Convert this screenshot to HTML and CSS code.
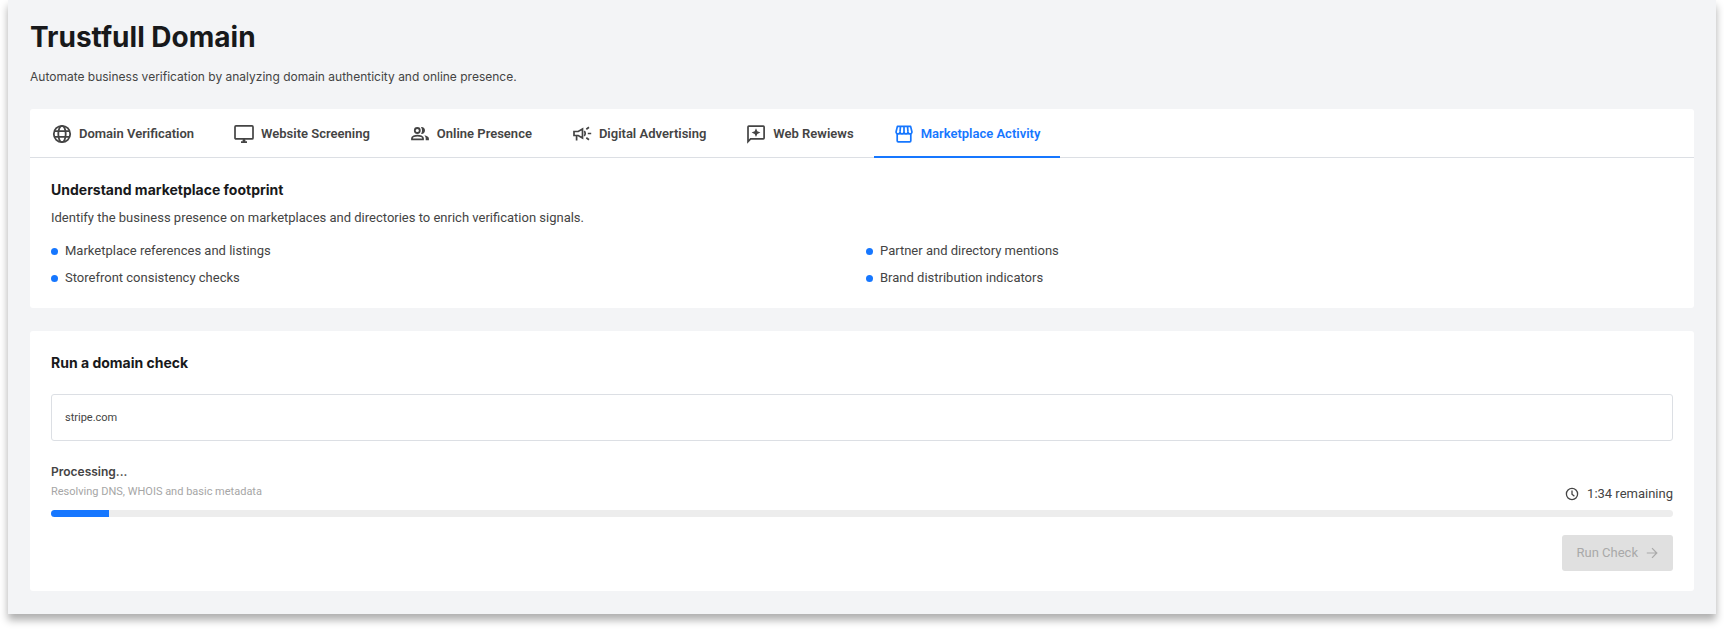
FILE: index.html
```html
<!DOCTYPE html>
<html lang="en">
<head>
<meta charset="utf-8">
<title>Trustfull Domain</title>
<link rel="stylesheet" href="styles.css">
</head>
<body>
<main class="page">
  <header class="page-header">
    <h1 class="page-title">Trustfull Domain</h1>
    <p class="page-subtitle">Automate business verification by analyzing domain authenticity and online presence.</p>
  </header>

  <section class="card">
    <div class="tabs" role="tablist">
      <button class="tab" type="button" role="tab" aria-selected="false">
        <svg class="icon" viewBox="0 0 20 20" fill="none" stroke="currentColor" stroke-width="1.8"><circle cx="10" cy="10" r="8.2"/><ellipse cx="10" cy="10" rx="3.7" ry="8.2"/><path d="M2.4 7.2h15.2M2.4 12.8h15.2"/></svg>
        Domain Verification
      </button>
      <button class="tab" type="button" role="tab" aria-selected="false">
        <svg class="icon" viewBox="0 0 20 20" fill="none" stroke="currentColor" stroke-width="1.7"><rect x="1" y="1.9" width="18" height="13" rx="1"/><path d="M7 18.2h6M10 15v3"/><path d="M8.6 16.6h2.8" stroke-width="2"/></svg>
        Website Screening
      </button>
      <button class="tab" type="button" role="tab" aria-selected="false">
        <svg class="icon" viewBox="0 0 20 20" fill="none" stroke="currentColor" stroke-width="1.8"><circle cx="7.300" cy="6.500" r="2.500"/><path d="M2 15.300v-1c0-1.600 3-2.600 5.500-2.600s5.500 1 5.500 2.600v1z"/><path d="M11 3.200c2-.5 4 1 4 3.300s-2 3.800-4 3.300c1.400-2 1.400-4.600 0-6.600zM14.300 11.200c2.500.5 4.600 1.500 4.600 3.300v1.700h-3.200v-1.800c0-1.300-.5-2.400-1.400-3.200z" fill="currentColor" stroke="none"/></svg>
        Online Presence
      </button>
      <button class="tab" type="button" role="tab" aria-selected="false">
        <svg class="icon" viewBox="0 0 20 20" fill="none" stroke="currentColor" stroke-width="1.700"><path d="M2 7.500h4.200L10.500 5v9L6.200 11.500H2zM4.600 11.500v5"/><path d="M12.200 7.200c1.300 1.200 1.300 3.400 0 4.600M15.800 9.500h3.400M14.300 5.200l2.700-2M14.300 13.800l2.700 2"/></svg>
        Digital Advertising
      </button>
      <button class="tab" type="button" role="tab" aria-selected="false">
        <svg class="icon" viewBox="0 0 20 20" fill="none" stroke="currentColor" stroke-width="1.7"><path d="M2 17.6V2.9c0-.5.3-.8.8-.8h14.5c.5 0 .8.3.8.8v11.2c0 .5-.3.8-.8.8H4.600z"/><path d="M10 4.200l1.300 3.100 3.100 1.300-3.100 1.300L10 13 8.700 9.900 5.600 8.600l3.100-1.300z" fill="currentColor" stroke="none"/></svg>
        Web Rewiews
      </button>
      <button class="tab tab-active" type="button" role="tab" aria-selected="true">
        <svg class="icon" viewBox="0 0 20 20" fill="none" stroke="currentColor" stroke-width="1.7" stroke-linejoin="round"><path d="M3.200 9.500v7.300c0 .6.400 1 1 1h11.600c.6 0 1-.4 1-1V9.500"/><path d="M3.400 2.400h13.200l1.300 5.300c.2 1.200-.7 2.200-1.900 2.200s-2-.9-2-2c0 1.100-.9 2-2 2s-2-.9-2-2c0 1.100-.9 2-2 2s-2-.9-2-2c0 1.100-.8 2-2 2s-2.100-1-1.900-2.200zM10 2.400v5.500M6.500 2.400L6 7.900M13.500 2.400l.5 5.500"/></svg>
        Marketplace Activity
      </button>
    </div>
    <div class="panel" role="tabpanel">
      <h2 class="section-title">Understand marketplace footprint</h2>
      <p class="panel-text">Identify the business presence on marketplaces and directories to enrich verification signals.</p>
      <ul class="features">
        <li class="feature">Marketplace references and listings</li>
        <li class="feature">Partner and directory mentions</li>
        <li class="feature">Storefront consistency checks</li>
        <li class="feature">Brand distribution indicators</li>
      </ul>
    </div>
  </section>

  <form class="card check">
    <h2 class="section-title"><label for="domain">Run a domain check</label></h2>
    <input class="domain-input" id="domain" type="text" value="stripe.com">
    <div class="status">
      <div class="status-text">
        <p class="status-title">Processing...</p>
        <p class="status-detail">Resolving DNS, WHOIS and basic metadata</p>
      </div>
      <p class="remaining">
        <svg class="clock" viewBox="0 0 14 14" fill="none" stroke="currentColor" stroke-width="1.300"><circle cx="7" cy="7" r="5.600"/><path d="M7 3.600V7.200l2.400 2"/></svg>
        1:34 remaining
      </p>
    </div>
    <div class="progress" role="progressbar" aria-label="Domain check" aria-valuenow="4" aria-valuemin="0" aria-valuemax="100"><div class="progress-fill" style="width: 3.6%"></div></div>
    <button class="run-button" type="submit" disabled>
      Run Check
      <svg class="arrow" viewBox="0 0 12 12" fill="none" stroke="currentColor" stroke-width="1.200"><path d="M.8 6h10M6 1.200L10.800 6 6 10.800"/></svg>
    </button>
  </form>
</main>
</body>
</html>
```
FILE: styles.css
```css
* {
  box-sizing: border-box;
}

body {
  margin: 0;
  background: #fff;
  color: #444;
  font-family: Roboto, "Liberation Sans", sans-serif;
  font-size: 13px;
  line-height: 20px;
}

h1,
h2,
p,
ul {
  margin: 0;
  padding: 0;
}

.page {
  margin: 0 8px 16px;
  padding: 20px 22px 23px;
  background: #f3f4f6;
  box-shadow: 0 6px 8px rgba(0, 0, 0, 0.32);
}

.page-title {
  color: #18191b;
  font-family: Inter, sans-serif;
  font-size: 28px;
  font-weight: 700;
  line-height: 34px;
}

.page-subtitle {
  margin: 13px 0 22px;
  font-family: Inter, sans-serif;
  font-size: 12px;
}

.card {
  background: #fff;
  border-radius: 3px;
}

.tabs {
  display: flex;
  height: 49px;
  padding-left: 2px;
  border-bottom: 1px solid #dcdfe4;
}

.tab {
  display: flex;
  align-items: center;
  gap: 7px;
  height: 49px;
  padding: 2px 20px 0;
  border: 0;
  border-bottom: 2px solid transparent;
  background: none;
  color: #444;
  font: 600 13px/20px Roboto, sans-serif;
  white-space: nowrap;
}

.tab-active {
  border-bottom-color: #1677ff;
  color: #1677ff;
}

.icon {
  width: 20px;
  height: 20px;
  flex: none;
}

.panel {
  padding: 22px 21px 20px;
}

.section-title {
  color: #18191b;
  font-family: Inter, sans-serif;
  font-size: 14px;
  font-weight: 700;
  line-height: 20px;
}

.panel-text {
  margin: 8px 0 13px;
}

.features {
  display: grid;
  grid-template-columns: 1fr 1fr;
  gap: 7px 8px;
  list-style: none;
}

.feature {
  display: flex;
  align-items: center;
  gap: 7px;
}

.feature::before {
  content: "";
  width: 7px;
  height: 7px;
  border-radius: 50%;
  background: #1677ff;
}

.check {
  display: flex;
  flex-direction: column;
  margin-top: 23px;
  padding: 22px 21px 20px;
}

.domain-input {
  width: 100%;
  height: 47px;
  margin: 21px 0;
  padding: 0 13px;
  border: 1px solid #dcdfe4;
  border-radius: 3px;
  background: #fff;
  color: #444;
  font: 11px/20px Roboto, sans-serif;
}

.status {
  display: flex;
  align-items: flex-end;
  justify-content: space-between;
}

.status-text {
  padding-bottom: 2px;
}

.status-title {
  font-family: Inter, sans-serif;
  font-size: 12px;
  font-weight: 600;
}

.status-detail {
  color: #a6a6a6;
  font-size: 11px;
}

.remaining {
  display: flex;
  align-items: center;
  gap: 8px;
}

.clock {
  width: 14px;
  height: 14px;
}

.progress {
  height: 7px;
  margin: 6px 0 18px;
  overflow: hidden;
  border-radius: 4px;
  background: #ededed;
}

.progress-fill {
  height: 100%;
  background: #1677ff;
}

.run-button {
  display: flex;
  align-items: center;
  align-self: flex-end;
  gap: 8px;
  height: 36px;
  padding: 0 15px;
  border: 0;
  border-radius: 3px;
  background: #e0e0e0;
  color: #a9a9a9;
  font: 13px/20px Roboto, sans-serif;
}

.arrow {
  width: 12px;
  height: 12px;
}
```
